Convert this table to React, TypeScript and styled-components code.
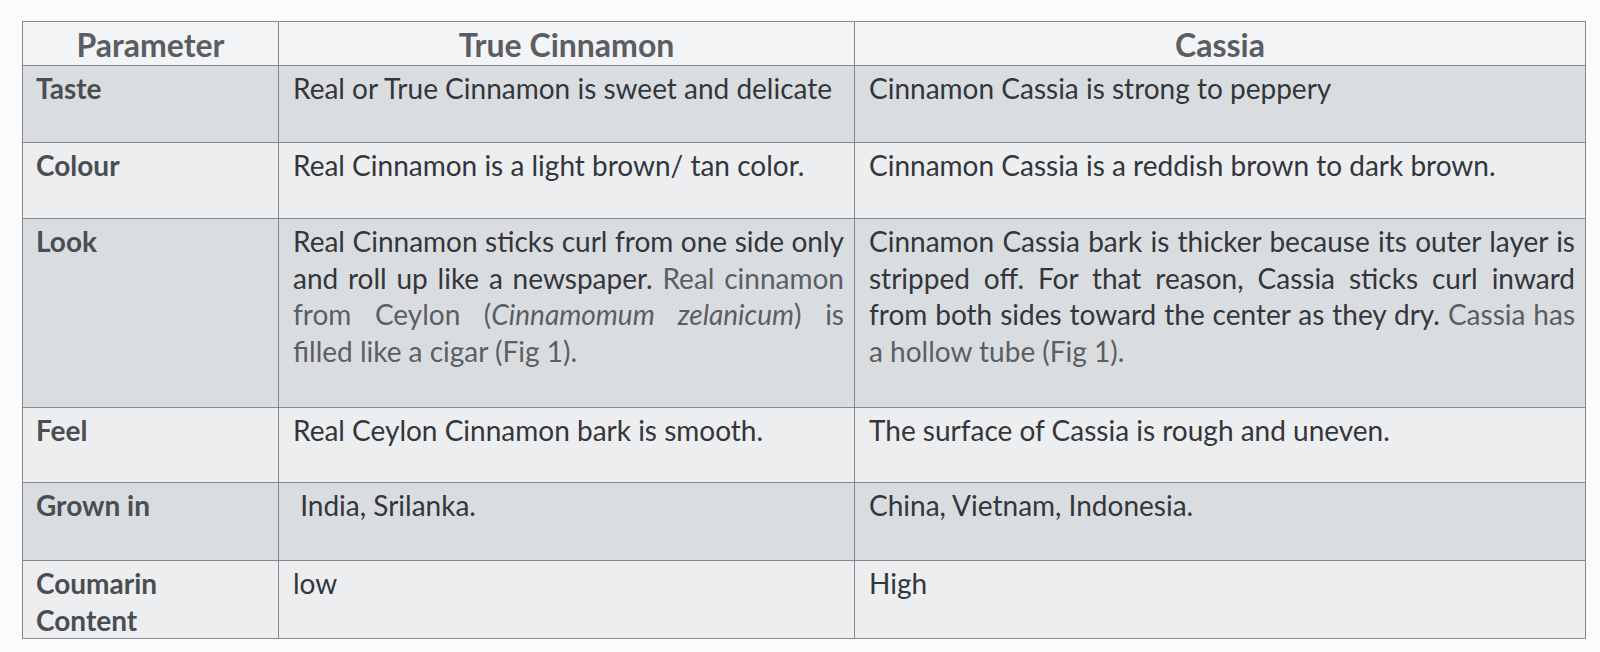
import React from 'react'
import styled, { createGlobalStyle } from 'styled-components'

const GlobalStyle = createGlobalStyle`
  html, body {
    margin: 0;
    padding: 0;
    background: #fbfbfb;
  }
  body {
    font-family: Lato, "Open Sans", sans-serif;
  }
`

const Page = styled.div`
  width: 1600px;
  height: 652px;
  padding: 21px 0 0 22px;
  box-sizing: border-box;
  background: #fbfbfb;
`

const Table = styled.table`
  border-collapse: collapse;
  table-layout: fixed;
  width: 1563px;
  border: 1px solid #85888c;
`

const Col = styled.col<{ $w: number }>`
  width: ${({ $w }) => $w}px;
`

const Row = styled.tr<{ $h: number; $shade: 'white' | 'light' | 'dark' }>`
  height: ${({ $h }) => $h}px;
  background: ${({ $shade }) =>
    $shade === 'dark' ? '#dadde0' : $shade === 'light' ? '#eceef0' : '#f3f4f5'};
`

const HeadCell = styled.th`
  border: 1px solid #85888c;
  padding: 2px 0 0;
  font-size: 32px;
  font-weight: 700;
  color: #5a5e63;
  text-align: center;
  vertical-align: middle;
  line-height: 38px;
`

const NameCell = styled.td`
  border: 1px solid #85888c;
  padding: 4px 8px 0 13px;
  font-size: 28px;
  font-weight: 700;
  color: #4a4e53;
  vertical-align: top;
  line-height: 36.5px;
`

const TextCell = styled.td`
  border: 1px solid #85888c;
  padding: 4px 10px 0 14px;
  font-size: 28px;
  color: #33363b;
  vertical-align: top;
  line-height: 36.5px;
  text-align: justify;
`

const Faint = styled.span`
  color: #5b5f64;
`

const rows = [
  {
    name: 'Taste',
    h: 77,
    shade: 'dark' as const,
    a: <>Real or True Cinnamon is sweet and delicate</>,
    b: <>Cinnamon Cassia is strong to peppery</>,
  },
  {
    name: 'Colour',
    h: 76,
    shade: 'light' as const,
    a: <>Real Cinnamon is a light brown/ tan color.</>,
    b: <>Cinnamon Cassia is a reddish brown to dark brown.</>,
  },
  {
    name: 'Look',
    h: 189,
    shade: 'dark' as const,
    a: (
      <>
        Real Cinnamon sticks curl from one side only and roll up like a newspaper.{' '}
        <Faint>
          Real cinnamon from Ceylon (<i>Cinnamomum zelanicum</i>) is filled like a cigar (Fig 1).
        </Faint>
      </>
    ),
    b: (
      <>
        Cinnamon Cassia bark is thicker because its outer layer is stripped off. For that reason,
        Cassia sticks curl inward from both sides toward the center as they dry.{' '}
        <Faint>Cassia has a hollow tube (Fig 1).</Faint>
      </>
    ),
  },
  {
    name: 'Feel',
    h: 75,
    shade: 'light' as const,
    a: <>Real Ceylon Cinnamon bark is smooth.</>,
    b: <>The surface of Cassia is rough and uneven.</>,
  },
  {
    name: 'Grown in',
    h: 78,
    shade: 'dark' as const,
    a: <>&nbsp;India, Srilanka.</>,
    b: <>China, Vietnam, Indonesia.</>,
  },
  {
    name: (
      <>
        Coumarin
        <br />
        Content
      </>
    ),
    h: 77,
    shade: 'light' as const,
    a: <>low</>,
    b: <>High</>,
  },
]

export default function App() {
  return (
    <>
      <GlobalStyle />
      <Page>
        <Table>
          <colgroup>
            <Col $w={256} />
            <Col $w={576} />
            <Col $w={731} />
          </colgroup>
          <thead>
            <Row $h={44} $shade="white">
              <HeadCell>Parameter</HeadCell>
              <HeadCell>True Cinnamon</HeadCell>
              <HeadCell>Cassia</HeadCell>
            </Row>
          </thead>
          <tbody>
            {rows.map((r, i) => (
              <Row key={i} $h={r.h} $shade={r.shade}>
                <NameCell>{r.name}</NameCell>
                <TextCell>{r.a}</TextCell>
                <TextCell>{r.b}</TextCell>
              </Row>
            ))}
          </tbody>
        </Table>
      </Page>
    </>
  )
}
